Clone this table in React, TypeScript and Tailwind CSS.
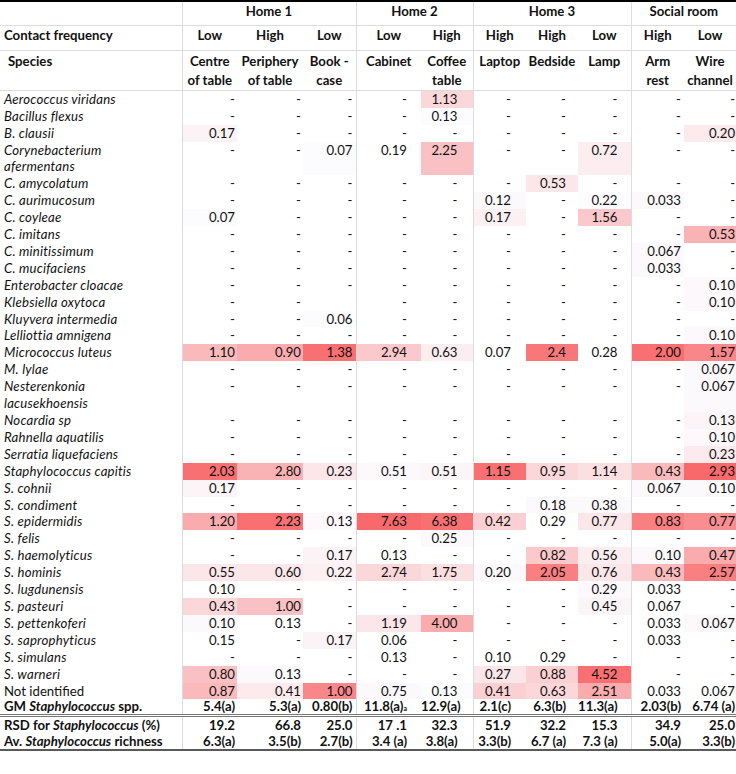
import React from "react";

// [species, cells] — cell "v:t" = value with heat t (0-100), "-" dash, "_" blank
const rows: [string, string][] = [
  ["Aerococcus viridans", "- - - - 1.13:25 - - - - -"],
  ["Bacillus flexus", "- - - - 0.13:0 - - - - -"],
  ["B. clausii", "0.17:6 - - - - - - - - 0.20:12"],
  ["Corynebacterium|afermentans", "- - 0.07:0 0.19 2.25:40 - - 0.72:10 - -"],
  ["C. amycolatum", "- - - - - - 0.53:15 - - -"],
  ["C. aurimucosum", "- - - - - 0.12:2 - 0.22:0 0.033:2 -"],
  ["C. coyleae", "0.07:0 - - - - 0.17:8 - 1.56:35 - -"],
  ["C. imitans", "- - - - - - - - - 0.53:50"],
  ["C. minitissimum", "- - - - - - - - 0.067:3 -"],
  ["C. mucifaciens", "- - - - - - - - 0.033:2 -"],
  ["Enterobacter cloacae", "- - - - - - - - - 0.10:3"],
  ["Klebsiella oxytoca", "- - _ - - - - - - 0.10:3"],
  ["Kluyvera intermedia", "- - 0.06:0 - - - - - - -"],
  ["Lelliottia amnigena", "- - - - - - - - - 0.10:3"],
  ["Micrococcus luteus", "1.10:45 0.90:55 1.38:95 2.94:35 0.63:10 0.07 2.4:90 0.28 2.00:95 1.57:80"],
  ["M. lylae", "- - - - - - - - - 0.067:2"],
  ["Nesterenkonia|lacusekhoensis", "- - - - - - - - - 0.067:2"],
  ["Nocardia sp", "- - - - - - - - - 0.13:5"],
  ["Rahnella aquatilis", "- - - - - - - - - 0.10:3"],
  ["Serratia liquefaciens", "- - - - - - - - - 0.23:12"],
  ["Staphylococcus capitis", "2.03:95 2.80:50 0.23:15 0.51:3 0.51:5 1.15:95 0.95:25 1.14:20 0.43:45 2.93:100"],
  ["S. cohnii", "0.17:5 - - - - - - - 0.067:2 0.10:2"],
  ["S. condiment", "- - - - - - 0.18:2 0.38:2 - -"],
  ["S. epidermidis", "1.20:55 2.23:95 0.13:3 7.63:100 6.38:95 0.42:30 0.29 0.77:15 0.83:85 0.77:75"],
  ["S. felis", "- - - - 0.25:2 - - - - -"],
  ["S. haemolyticus", "- - 0.17:6 0.13 - - 0.82:35 0.56:10 0.10:2 0.47:55"],
  ["S. hominis", "0.55:15 0.60:15 0.22:8 2.74:25 1.75:20 0.20:3 2.05:85 0.76:15 0.43:45 2.57:85"],
  ["S. lugdunensis", "0.10 - - - - - - 0.29:3 0.033 -"],
  ["S. pasteuri", "0.43:25 1.00:40 - - - - - 0.45:5 0.067 -"],
  ["S. pettenkoferi", "0.10:2 0.13 - 1.19:15 4.00:55 - - - 0.033 0.067:3"],
  ["S. saprophyticus", "0.15 - 0.17:6 0.06 - - - - 0.033 -"],
  ["S. simulans", "- - - 0.13 - 0.10 0.29 - - -"],
  ["S. warneri", "0.80:40 0.13:2 - - - 0.27:15 0.88:30 4.52:95 - -"],
  ["Not identified", "0.87:45 0.41:12 1.00:80 0.75:3 0.13:0 0.41:30 0.63:25 2.51:55 0.033 0.067"],
];

const widths = ["w-[55px]", "w-[66px]", "w-[53px]", "w-[65px]", "w-[52px]", "w-[53px]", "w-[52px]", "w-[53px]", "w-[53px]", "w-[52px]"];
const pads = ["pr-[2px]", "pr-[2px]", "pr-[3px]", "pr-[14px]", "pr-[15px]", "pr-[15px]", "pr-[12px]", "pr-[13px]", "pr-[3px]", "pr-[1px]"];
const groupStart = [true, false, false, true, false, true, false, false, true, false];

const line = "border-[#dcdcdc]";

function heat(t: number) {
  const k = t / 100;
  const r = Math.round(252 + (248 - 252) * k);
  const g = Math.round(252 + (105 - 252) * k);
  const b = Math.round(255 + (107 - 255) * k);
  return `rgb(${r},${g},${b})`;
}

function colCls(i: number) {
  return `${pads[i]} ${groupStart[i] ? `border-l ${line}` : ""}`;
}

function Species({ name }: { name: string }) {
  if (name === "Not identified") return <>{name}</>;
  const parts = name.split("|");
  return (
    <span className="italic tracking-[0.2px]">
      {parts.map((p, i) => (
        <React.Fragment key={i}>
          {i > 0 && <br />}
          {p}
        </React.Fragment>
      ))}
    </span>
  );
}

function Staph({ pre, post }: { pre: string; post: string }) {
  return (
    <>
      {pre}
      <span className="italic">Staphylococcus</span>
      {post}
    </>
  );
}

const gm = ["5.4(a)", "5.3(a)", "0.80(b)", "11.8(a)", "12.9(a)", "2.1(c)", "6.3(b)", "11.3(a)", "2.03(b)", "6.74 (a)"];
const rsd = ["19.2", "66.8", "25.0", "17 .1", "32.3", "51.9", "32.2", "15.3", "34.9", "25.0"];
const rich = ["6.3(a)", "3.5(b)", "2.7(b)", "3.4 (a)", "3.8(a)", "3.3(b)", "6.7 (a)", "7.3 (a)", "5.0(a)", "3.3(b)"];

const freq = ["Low", "High", "Low", "Low", "High", "High", "High", "Low", "High", "Low"];
const sites: React.ReactNode[] = [
  <>Centre<br />of table</>,
  <>Periphery<br />of table</>,
  <>Book -<br />case</>,
  <>Cabinet</>,
  <>Coffee<br />table</>,
  <>Laptop</>,
  <>Bedside</>,
  <>Lamp</>,
  <>Arm<br />rest</>,
  <>Wire<br />channel</>,
];

export default function App() {
  return (
    <div className="w-[736px] h-[774px] bg-white text-[#111] font-['Lato',sans-serif] text-[13.2px]">
      <table className="w-[736px] table-fixed border-collapse">
        <colgroup>
          <col className="w-[182px]" />
          {widths.map((w, i) => (
            <col key={i} className={w} />
          ))}
        </colgroup>
        <thead className="font-bold">
          <tr className="border-t-2 border-black">
            <th className={`h-[24px] p-0 border-b ${line}`} />
            <th colSpan={3} className={`p-0 pb-[3px] text-center border-b border-l ${line}`}>Home 1</th>
            <th colSpan={2} className={`p-0 pb-[3px] text-center border-b border-l ${line}`}>Home 2</th>
            <th colSpan={3} className={`p-0 pb-[3px] text-center border-b border-l ${line}`}>Home 3</th>
            <th colSpan={2} className={`p-0 pb-[3px] text-center border-b border-l ${line}`}>Social room</th>
          </tr>
          <tr>
            <th className={`h-[25px] p-0 pl-[4px] pb-[4px] text-left border-b ${line}`}>Contact frequency</th>
            {freq.map((f, i) => (
              <th key={i} className={`p-0 pb-[4px] text-center border-b ${line} ${groupStart[i] ? `border-l ${line}` : ""}`}>
                {f}
              </th>
            ))}
          </tr>
          <tr>
            <th className={`h-[38px] p-0 pt-[1px] pl-[8px] align-top text-left leading-[19px] border-b ${line}`}>Species</th>
            {sites.map((s, i) => (
              <th
                key={i}
                className={`p-0 pt-[1px] align-top text-center leading-[19px] border-b ${line} ${groupStart[i] ? `border-l ${line}` : ""}`}
              >
                {s}
              </th>
            ))}
          </tr>
        </thead>
        <tbody className="leading-[16.9px]">
          {rows.map(([name, cells]) => (
            <tr key={name}>
              <td className="p-0 pl-[4px] align-top whitespace-nowrap">
                <Species name={name} />
              </td>
              {cells.split(" ").map((c, i) => {
                const [v, t] = c.split(":");
                return (
                  <td
                    key={i}
                    className={`p-0 align-top text-right ${colCls(i)}`}
                    style={t !== undefined ? { backgroundColor: heat(Number(t)) } : undefined}
                  >
                    {v === "_" ? "" : v}
                  </td>
                );
              })}
            </tr>
          ))}
          <tr className="font-bold leading-[15px] border-b-[3px] border-double border-[#777]">
            <td className="p-0 pl-[4px] whitespace-nowrap">
              <Staph pre="GM " post=" spp." />
            </td>
            {gm.map((v, i) => (
              <td key={i} className={`p-0 text-right whitespace-nowrap ${colCls(i)}`}>
                {v}
                {i === 3 && <span className="text-[7px] leading-none">a</span>}
              </td>
            ))}
          </tr>
          <tr className="font-bold leading-[16px]">
            <td className="p-0 pl-[4px] whitespace-nowrap">
              <Staph pre="RSD for " post=" (%)" />
            </td>
            {rsd.map((v, i) => (
              <td key={i} className={`p-0 text-right whitespace-nowrap ${colCls(i)}`}>
                {v}
              </td>
            ))}
          </tr>
          <tr className="font-bold leading-[16px] border-b-2 border-[#5a5a5a]">
            <td className="p-0 pl-[4px] whitespace-nowrap">
              <Staph pre="Av. " post=" richness" />
            </td>
            {rich.map((v, i) => (
              <td key={i} className={`p-0 text-right whitespace-nowrap ${colCls(i)}`}>
                {v}
              </td>
            ))}
          </tr>
        </tbody>
      </table>
    </div>
  );
}
